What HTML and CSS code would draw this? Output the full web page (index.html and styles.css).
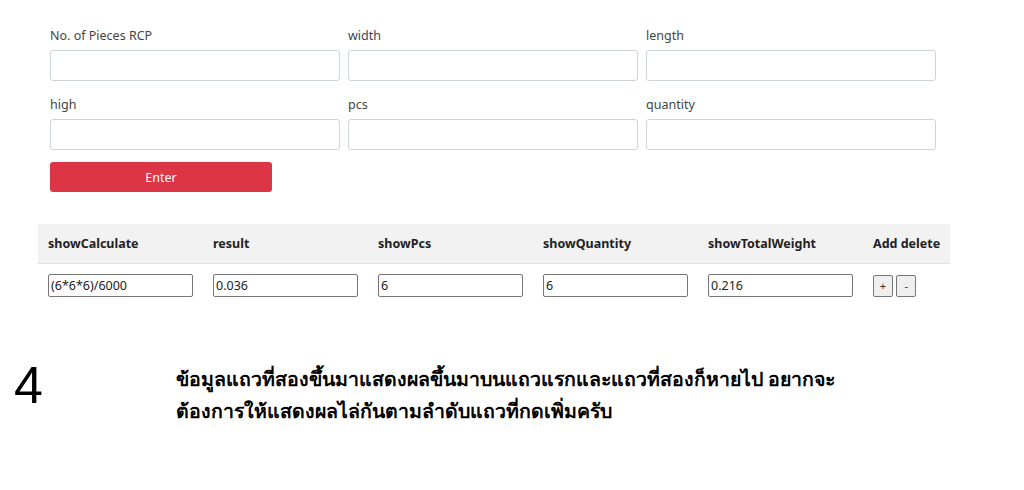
FILE: index.html
```html
<!DOCTYPE html>
<html lang="th">
  <head>
    <meta charset="UTF-8" />
    <meta name="viewport" content="width=device-width, initial-scale=1.0" />
    <title>Calculate</title>
    <link rel="stylesheet" href="styles.css">
  </head>
  <body>
    <div class="page">
      <form class="calcForm">
        <div class="row">
          <div class="field">
            <label>No. of Pieces RCP</label>
            <input type="text" class="formInput">
          </div>
          <div class="field">
            <label>width</label>
            <input type="text" class="formInput">
          </div>
          <div class="field">
            <label>length</label>
            <input type="text" class="formInput">
          </div>
        </div>
        <div class="row">
          <div class="field">
            <label>high</label>
            <input type="text" class="formInput">
          </div>
          <div class="field">
            <label>pcs</label>
            <input type="text" class="formInput">
          </div>
          <div class="field">
            <label>quantity</label>
            <input type="text" class="formInput">
          </div>
        </div>
        <button type="button" class="btnEnter">Enter</button>
      </form>

      <table class="resultTable">
        <thead>
          <tr>
            <th>showCalculate</th>
            <th>result</th>
            <th>showPcs</th>
            <th>showQuantity</th>
            <th>showTotalWeight</th>
            <th>Add delete</th>
          </tr>
        </thead>
        <tbody>
          <tr>
            <td><input type="text" class="cellInput" value="(6*6*6)/6000"></td>
            <td><input type="text" class="cellInput" value="0.036"></td>
            <td><input type="text" class="cellInput" value="6"></td>
            <td><input type="text" class="cellInput" value="6"></td>
            <td><input type="text" class="cellInput" value="0.216"></td>
            <td class="actions">
              <button type="button" class="btnSmall">+</button>
              <button type="button" class="btnSmall">-</button>
            </td>
          </tr>
        </tbody>
      </table>
    </div>

    <div class="note">
      <div class="noteNum">4</div>
      <p class="noteText">ข้อมูลแถวที่สองขึ้นมาแสดงผลขึ้นมาบนแถวแรกและแถวที่สองก็หายไป อยากจะ<br>ต้องการให้แสดงผลไล่กันตามลำดับแถวที่กดเพิ่มครับ</p>
    </div>
  </body>
</html>
```

FILE: styles.css
```css
* {
  margin: 0;
  padding: 0;
  box-sizing: border-box;
}

body {
  background: #fff;
  font-family: "Noto Sans", "Open Sans", sans-serif;
  font-size: 12.5px;
  color: #333;
}

.page {
  padding: 24px 0 0 38px;
  width: 948px;
}

.calcForm {
  padding: 0 12px;
}

.row {
  display: flex;
  gap: 8px;
}

.field {
  width: 290px;
  margin-bottom: 12px;
}

.field label {
  display: block;
  height: 22px;
  padding-top: 2px;
  line-height: 20px;
  margin-bottom: 4px;
  color: #444;
}

.formInput {
  display: block;
  width: 100%;
  height: 31px;
  border: 1px solid #ced4da;
  border-radius: 3px;
  padding: 4px 8px;
  font: inherit;
}

.btnEnter {
  width: 222px;
  height: 30px;
  background: #dc3545;
  color: #fff;
  border: none;
  border-radius: 3px;
  font: inherit;
}

.resultTable {
  margin-top: 32px;
  border-collapse: collapse;
  width: 910px;
}

.resultTable th {
  background: #f2f2f2;
  text-align: left;
  font-weight: bold;
  color: #222;
  height: 39px;
  padding: 0 10px;
  white-space: nowrap;
  border-bottom: 1px solid #dee2e6;
}

.resultTable td {
  padding: 10px 10px;
  vertical-align: top;
}

.actions {
  white-space: nowrap;
}

.cellInput {
  display: block;
  width: 145px;
  height: 23px;
  border: 1px solid #767676;
  border-radius: 2px;
  padding: 0 2px;
  font: inherit;
  color: #222;
}

.btnSmall {
  width: 20px;
  height: 22px;
  margin-top: 1px;
  background: #efefef;
  border: 1px solid #767676;
  border-radius: 2px;
  font: inherit;
  font-size: 11px;
  color: #333;
}

.note {
  display: flex;
  align-items: flex-start;
  margin-top: 50px;
  padding-left: 14px;
}

.noteNum {
  width: 162px;
  font-family: "Liberation Sans", Arial, sans-serif;
  font-size: 52px;
  line-height: 56px;
  color: #000;
}

.noteText {
  margin-top: 6px;
  font-family: "Liberation Sans", "Noto Sans", sans-serif;
  font-size: 19.5px;
  font-weight: bold;
  line-height: 32px;
  color: #000;
}
```
